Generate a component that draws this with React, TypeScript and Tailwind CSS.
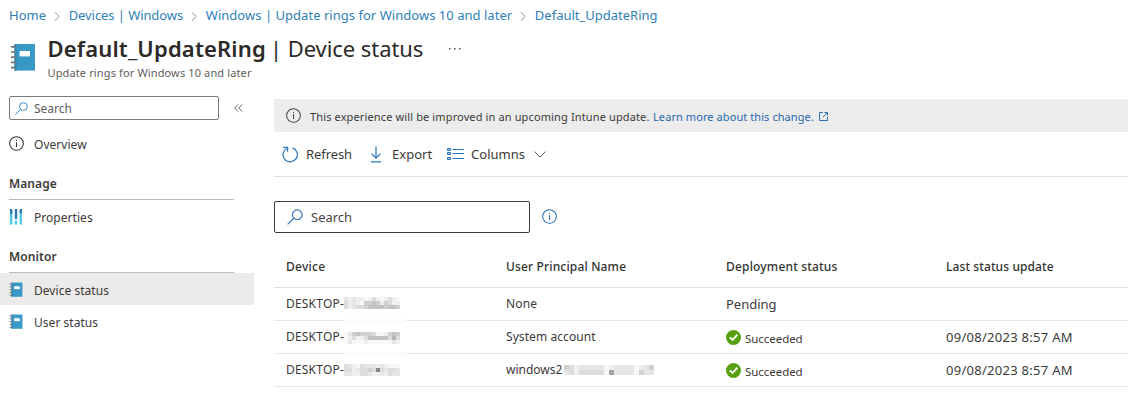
import type { ReactNode } from "react";

function NotebookIcon({ className }: { className: string }) {
  return (
    <svg viewBox="0 0 26 28" className={className}>
      <path d="M4.5 1H25V27.6H4.5z" fill="#3999c6" />
      <path d="M4.5 1H6.5V27.6H4.5z" fill="#3585ad" />
      <path d="M9.6 8H20V13.4H9.6z" fill="#fff" />
      <path
        d="M1.6 3.8h4M1.6 9h4M1.6 14.2h4M1.6 19.4h4M1.6 24.6h4"
        stroke="#6e7478"
        strokeWidth="1.7"
        strokeLinecap="round"
      />
    </svg>
  );
}

function SearchIcon({ className }: { className: string }) {
  return (
    <svg viewBox="0 0 16 16" fill="none" stroke="currentColor" className={className}>
      <circle cx="10.3" cy="5.7" r="4.8" strokeWidth="1.1" />
      <path d="M6.9 9.1L0.6 15.4" strokeWidth="1.2" />
    </svg>
  );
}

function InfoIcon({ className }: { className: string }) {
  return (
    <svg viewBox="0 0 16 16" fill="none" stroke="currentColor" className={className}>
      <circle cx="8" cy="8" r="7.3" strokeWidth="1.1" />
      <path d="M8 6.6V11.6M8 4.2V5.4" strokeWidth="1.1" />
    </svg>
  );
}

function PropertiesIcon() {
  return (
    <svg viewBox="0 0 14 16" className="h-4 w-3.5">
      <path d="M1 0h2.4v5H1zM5.8 0h2.4v10H5.8zM10.6 0H13v4h-2.4z" fill="#2a7ab0" />
      <path d="M1 5h2.4v10.5H1zM5.8 11.5h2.4v4H5.8zM10.6 4H13v11.5h-2.4z" fill="#50c8e8" />
    </svg>
  );
}

function CheckIcon() {
  return (
    <svg viewBox="0 0 16 16" className="size-[15px]">
      <circle cx="8" cy="8" r="8" fill="#57a010" />
      <path d="M4 7.8L7 10.6L12.2 5" fill="none" stroke="#fff" strokeWidth="2" />
    </svg>
  );
}

function Crumb({ children, first, className = "" }: { children: ReactNode; first?: boolean; className?: string }) {
  return (
    <>
      {!first && (
        <svg viewBox="0 0 7 12" fill="none" stroke="#7a7a7a" className="ml-2 mr-[8.7px] mt-px h-[11px] w-[6px]">
          <path d="M1 1l5 5-5 5" />
        </svg>
      )}
      <span className={className}>{children}</span>
    </>
  );
}

function NavItem({ icon, label, active, low }: { icon: ReactNode; label: string; active?: boolean; low?: boolean }) {
  return (
    <div className={`flex h-8 items-center pl-[9px] ${active ? "bg-[#edebe9]" : ""}`}>
      <span className={`flex w-[25px] items-center ${low ? "pt-px" : ""}`}>{icon}</span>
      <span className={`tracking-[0.04px] ${low ? "pt-[3px]" : "pt-[2px]"}`}>{label}</span>
    </div>
  );
}

function NavHeading({ children }: { children: ReactNode }) {
  return (
    <div className="ml-[9px] mr-5 flex h-8 items-center border-b border-[#bdbbb9] font-semibold tracking-[0.1px]">
      {children}
    </div>
  );
}

const mosaics: Record<string, string[]> = {
  a: ["21211013101310", "31210445414311", "31233455554554"],
  b: ["02454443001454", "01311355555363", "02000100000021"],
  c: ["32103222121000", "33123343832332", "22113321121322"],
  d: ["431222220122220124", "231333330722220422"],
};

const shades = ["#f8f8f8", "#efefef", "#e6e6e6", "#dcdcdc", "#d0d0d0", "#c3c3c3", "#b5b5b5", "#a6a6a6", "#868686"];

function Redacted({ id, cell, className = "" }: { id: string; cell: number; className?: string }) {
  const rows = mosaics[id];
  return (
    <svg
      width={rows[0].length * cell}
      height={rows.length * cell}
      shapeRendering="crispEdges"
      className={`relative ${className}`}
    >
      {rows.map((row, y) =>
        row.split("").map((shade, x) => (
          <rect key={`${x}-${y}`} x={x * cell} y={y * cell} width={cell} height={cell} fill={shades[Number(shade)]} />
        )),
      )}
    </svg>
  );
}

function Succeeded() {
  return (
    <span className="flex items-center gap-1">
      <CheckIcon />
      <span className="pt-[3px] text-[11.5px] tracking-[-0.05px]">Succeeded</span>
    </span>
  );
}

interface RowProps {
  id: string;
  shift?: string;
  smudge?: boolean;
  user: ReactNode;
  status: ReactNode;
  date?: string;
}

function Row({ id, shift, smudge, user, status, date }: RowProps) {
  return (
    <div className="relative grid h-[33px] grid-cols-[220px_220px_220px_1fr] items-center border-b border-[#e6e6e6] pl-3">
      <div className="flex items-center">
        <span className="w-[58px] tracking-[0.2px]">DESKTOP-</span>
        <Redacted id={id} cell={4} className={shift} />
      </div>
      <div className="flex items-center">{user}</div>
      <div>{status}</div>
      <div className="pt-px text-[13px] tracking-[0.28px]">{date}</div>
      {smudge && <span className="absolute -bottom-[3px] left-[70px] h-1 w-[62px] bg-[#fafafa]" />}
    </div>
  );
}

export default function App() {
  return (
    <div className="flex h-[417px] w-[1128px] flex-col overflow-hidden whitespace-nowrap bg-white font-['Noto_Sans','Open_Sans',sans-serif] text-[12px] text-[#3b3a39]">
      <nav className="flex h-[30px] items-center pl-[9px] pt-px text-[13px] text-[#2f80b8]">
        <Crumb first>Home</Crumb>
        <Crumb className="tracking-[-0.08px]">Devices | Windows</Crumb>
        <Crumb className="tracking-[0.03px]">Windows | Update rings for Windows 10 and later</Crumb>
        <Crumb>Default_UpdateRing</Crumb>
      </nav>

      <header className="flex h-[62px] pl-[9.5px]">
        <NotebookIcon className="mt-[13px] h-[28px] w-[26px]" />
        <div className="ml-[12px] flex flex-col">
          <div className="flex h-9 items-center text-[22px] leading-9 text-[#2b2a29]">
            <h1 className="font-semibold tracking-[0.17px]">Default_UpdateRing</h1>
            <span className="ml-1 tracking-[-0.06px]">| Device status</span>
            <svg viewBox="0 0 12 2" className="ml-[26px] mt-[2px] h-0.5 w-3 fill-[#505050]">
              <path d="M0 0h1.5v1.5H0zM5 0h1.5v1.5H5zM10 0h1.5v1.5H10z" />
            </svg>
          </div>
          <div className="h-4 text-[11px] leading-[14px] tracking-[0.13px] text-[#605e5c]">
            Update rings for Windows 10 and later
          </div>
        </div>
      </header>

      <div className="flex flex-1">
        <aside className="w-[254px] shrink-0">
          <div className="flex items-center pl-[9px] pt-1">
            <div className="flex h-6 w-[210px] items-center rounded-[2px] border border-[#7b7977] pl-[5px] text-[#605e5c]">
              <SearchIcon className="size-[13px] text-[#2f80c0]" />
              <span className="ml-[6px] pt-[2px]">Search</span>
            </div>
            <svg viewBox="0 0 9 8" fill="none" stroke="#6b6967" className="ml-[15px] h-2 w-[9px]">
              <path d="M4 .5L.7 4 4 7.5M8.2 .5L4.9 4l3.3 3.5" />
            </svg>
          </div>
          <div className="mt-2">
            <NavItem icon={<InfoIcon className="mb-px size-[15px] text-[#323130]" />} label="Overview" />
          </div>
          <div className="mt-2">
            <NavHeading>Manage</NavHeading>
          </div>
          <div className="mt-px">
            <NavItem icon={<PropertiesIcon />} label="Properties" />
          </div>
          <div className="mt-2">
            <NavHeading>Monitor</NavHeading>
          </div>
          <NavItem icon={<NotebookIcon className="h-[15px] w-[14px]" />} label="Device status" active low />
          <NavItem icon={<NotebookIcon className="h-[15px] w-[14px]" />} label="User status" low />
        </aside>

        <main className="flex-1 pl-5 pt-[7px]">
          <div className="flex h-[33px] items-center bg-[#ececec] pl-3">
            <InfoIcon className="mb-px size-[15px] text-[#484644]" />
            <span className="ml-[9px] pt-[3px] text-[11px] tracking-[0.13px]">
              This experience will be improved in an upcoming Intune update.
            </span>
            <a className="ml-[3.5px] pt-[3px] text-[11px] tracking-[0.08px] text-[#1f68ad]">Learn more about this change.</a>
            <svg viewBox="0 0 9 9" fill="none" stroke="#2a6db0" className="ml-[5px] mt-0.5 size-[9px]">
              <path d="M4 .5H.5v8h8V5M5.5 .5h3v3M8.3 .7L3.8 5.2" />
            </svg>
          </div>

          <div className="flex h-[45px] items-center border-b border-[#e1e1e1] pl-2 text-[13px]">
            <svg viewBox="0 0 16 17" fill="none" stroke="#2b74b8" strokeWidth="1.2" className="h-[17px] w-4">
              <path d="M10.5 1.9A7.2 7.2 0 1 1 4.6 2.4" />
              <path d="M1.2 1.4H5.6V5.8" />
            </svg>
            <span className="ml-2 pt-px tracking-[-0.08px]">Refresh</span>
            <svg viewBox="0 0 12 17" fill="none" stroke="#2b74b8" strokeWidth="1.2" className="ml-[18px] h-[17px] w-3">
              <path d="M6 .6v11.6M1.5 7.7L6 12.2 10.5 7.7M1 15.9h10" />
            </svg>
            <span className="ml-[10px] pt-px">Export</span>
            <svg viewBox="0 0 17 12" fill="none" stroke="#2b74b8" className="mb-px ml-[15px] h-3 w-[17px]">
              <path d="M5.5 1.5H17M5.5 5.5H17M5.5 10.5H17" strokeWidth="1.2" />
              <path d="M.5 .5h3v2h-3zM.5 4.5h3v2h-3zM.5 9.5h3v2h-3z" fill="#2b74b8" fillOpacity=".4" />
            </svg>
            <span className="ml-[7px] pt-px">Columns</span>
            <svg viewBox="0 0 12 7" fill="none" stroke="#605e5c" className="ml-[9px] h-[7px] w-3">
              <path d="M.6 .6L6 6 11.4 .6" />
            </svg>
          </div>

          <div className="mt-6 flex items-center">
            <div className="flex h-8 w-64 items-center rounded-[2px] border border-[#3b3a39] pl-3 text-[13px] text-[#484644]">
              <SearchIcon className="size-4 text-[#2b6cb8]" />
              <span className="ml-2 pt-[2px]">Search</span>
            </div>
            <InfoIcon className="mb-px ml-3 size-[15px] text-[#2b6cb8]" />
          </div>

          <div className="mt-[13px] grid h-[42px] grid-cols-[220px_220px_220px_1fr] items-center border-b border-[#e1e1e1] pl-3 font-medium text-[#323130]">
            <span className="tracking-[0.25px]">Device</span>
            <span className="tracking-[0.16px]">User Principal Name</span>
            <span className="tracking-[0.18px]">Deployment status</span>
            <span className="tracking-[0.1px]">Last status update</span>
          </div>
          <Row
            id="a"
            shift="-top-px"
            smudge
            user={<span className="tracking-[0.15px]">None</span>}
            status={<span className="block pt-[2px] text-[13px]">Pending</span>}
          />
          <Row
            id="b"
            shift="top-px"
            smudge
            user={<span className="tracking-[0.08px]">System account</span>}
            status={<Succeeded />}
            date="09/08/2023 8:57 AM"
          />
          <Row
            id="c"
            user={
              <>
                <span className="w-[58px]">windows2</span>
                <Redacted id="d" cell={5} />
              </>
            }
            status={<Succeeded />}
            date="09/08/2023 8:57 AM"
          />
        </main>
      </div>
    </div>
  );
}
